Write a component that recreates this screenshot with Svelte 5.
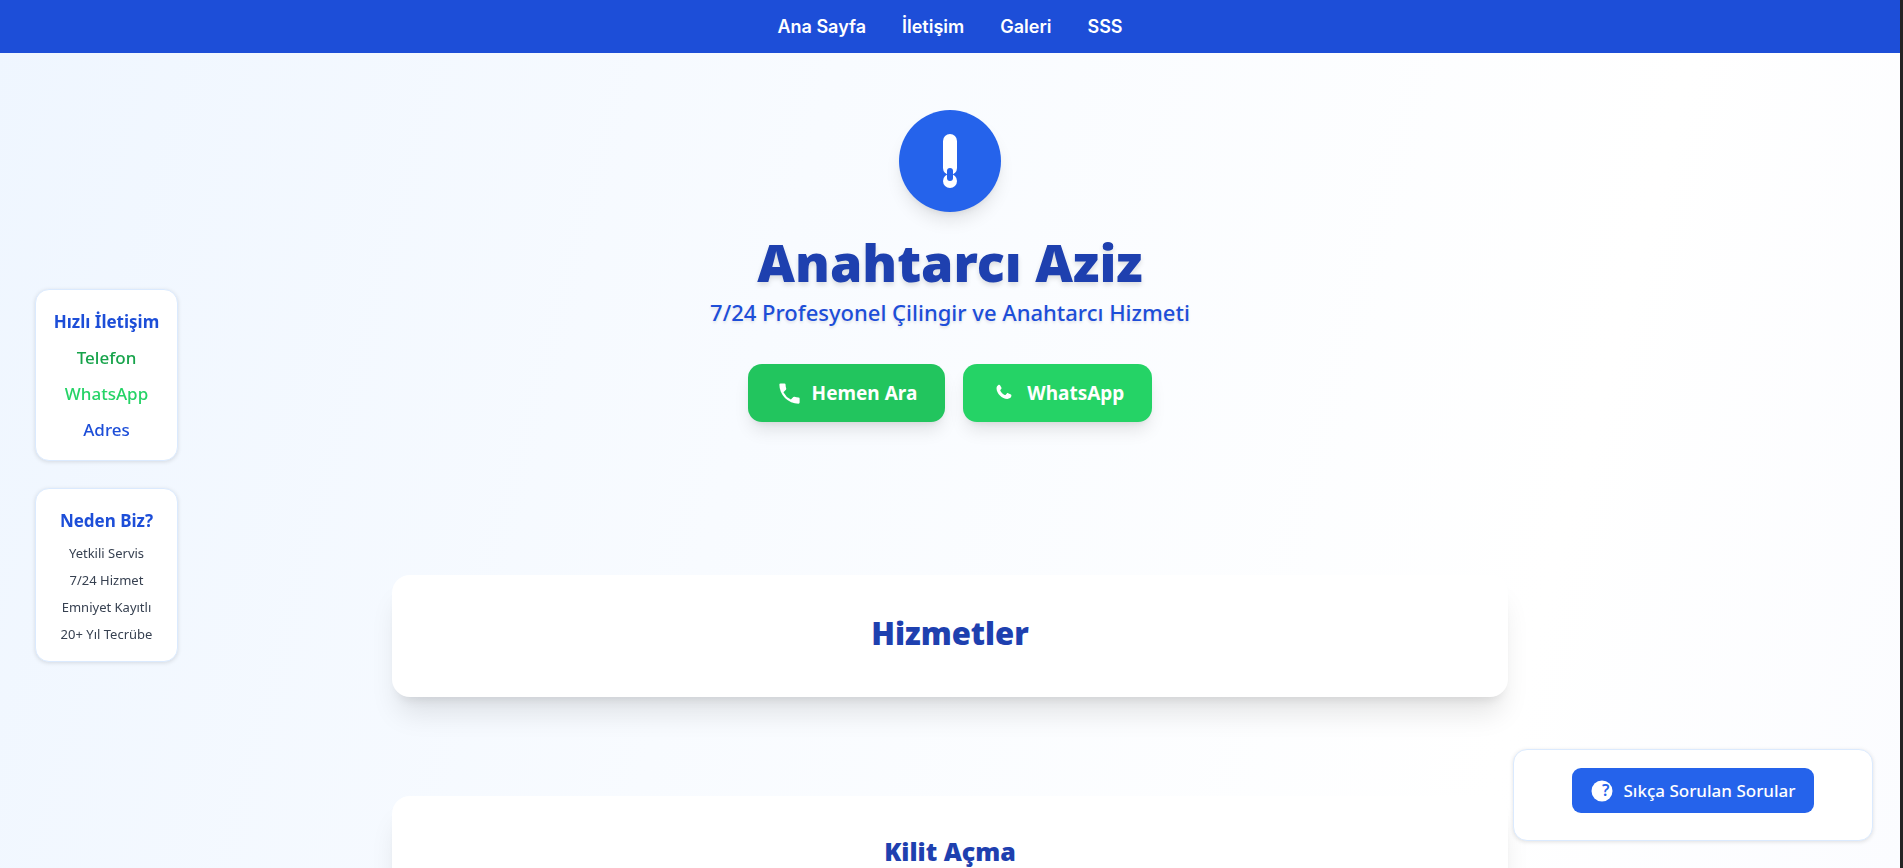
<script lang="ts">
  interface NavItem {
    label: string;
    href: string;
    tone?: string;
  }

  const navItems: NavItem[] = [
    { label: 'Ana Sayfa', href: '#ana-sayfa' },
    { label: 'İletişim', href: '#iletisim' },
    { label: 'Galeri', href: '#galeri' },
    { label: 'SSS', href: '#sss' },
  ];

  const quickLinks: NavItem[] = [
    { label: 'Telefon', href: '#telefon', tone: 'green' },
    { label: 'WhatsApp', href: '#whatsapp', tone: 'whatsapp' },
    { label: 'Adres', href: '#adres', tone: 'blue' },
  ];

  const reasons = ['Yetkili Servis', '7/24 Hizmet', 'Emniyet Kayıtlı', '20+ Yıl Tecrübe'];
</script>

<div class="page">
  <nav class="navbar">
    {#each navItems as item}
      <a href={item.href}>{item.label}</a>
    {/each}
  </nav>

  <main>
    <header class="hero">
      <div class="logo">
        <svg viewBox="0 0 102 102" aria-hidden="true">
          <rect x="44" y="24" width="14" height="41" rx="7" fill="#fff" />
          <circle cx="51" cy="71" r="7" fill="#fff" />
          <rect x="48" y="58" width="6" height="13" rx="3" fill="#2563eb" />
          <path d="M44 62.5 L47.5 64 L44 66.5 Z M58 62.5 L54.5 64 L58 66.5 Z" fill="#2563eb" />
        </svg>
      </div>
      <h1>Anahtarcı Aziz</h1>
      <p class="tagline">7/24 Profesyonel Çilingir ve Anahtarcı Hizmeti</p>
      <div class="actions">
        <a class="action call" href="#telefon">
          <svg viewBox="0 0 24 24" aria-hidden="true">
            <path d="M6.62 10.79a15.05 15.05 0 0 0 6.59 6.59l2.2-2.2a1 1 0 0 1 1.01-.24 11.36 11.36 0 0 0 3.58.57 1 1 0 0 1 1 1V20a1 1 0 0 1-1 1A17 17 0 0 1 3 4a1 1 0 0 1 1-1h3.5a1 1 0 0 1 1 1c0 1.25.2 2.46.57 3.58a1 1 0 0 1-.25 1.01z" />
          </svg>
          Hemen Ara
        </a>
        <a class="action whatsapp" href="#whatsapp">
          <svg viewBox="0 0 24 24" aria-hidden="true">
            <path d="M6.3 4.6c-.6.3-1.4 1.3-1.4 2.7 0 4.6 4.9 9.500 9.600 9.500 1.900 0 3.400-1 3.600-2.500.1-.9 0-1.200-.4-1.400l-2.500-1.200c-.4-.2-.8-.1-1.100.3l-1 1.200c-.3.300-.5.300-.9.100-1.700-.7-3.100-2.100-3.900-3.700-.2-.4-.1-.6.2-.9l.7-.9c.2-.3.200-.6.1-.9L8.200 4.900c-.2-.5-.5-.6-.9-.6-.4 0-.7.1-1 .3z" />
          </svg>
          WhatsApp
        </a>
      </div>
    </header>

    <section class="card">
      <h2>Hizmetler</h2>
    </section>
    <section class="card">
      <h3>Kilit Açma</h3>
    </section>
  </main>

  <aside class="side">
    <div class="panel">
      <h4>Hızlı İletişim</h4>
      <ul class="links">
        {#each quickLinks as link}
          <li><a class={link.tone} href={link.href}>{link.label}</a></li>
        {/each}
      </ul>
    </div>
    <div class="panel">
      <h4>Neden Biz?</h4>
      <ul class="reasons">
        {#each reasons as reason}
          <li>{reason}</li>
        {/each}
      </ul>
    </div>
  </aside>

  <aside class="faq">
    <button type="button">
      <svg viewBox="0 0 24 24" aria-hidden="true">
        <circle cx="12" cy="12" r="10.5" fill="#fff" />
        <text x="12" y="17" font-size="16">?</text>
      </svg>
      Sıkça Sorulan Sorular
    </button>
  </aside>
</div>

<style>
  :global(body) {
    margin: 0;
    overflow: hidden;
  }

  .page {
    box-sizing: border-box;
    height: 100vh;
    overflow-y: auto;
    scrollbar-width: none;
    border-right: 3px solid #242424;
    background: linear-gradient(105deg, #eff6ff 0%, #f8fbff 40%, #ffffff 80%, #fbfcff 100%);
    font-family: 'Noto Sans', 'Open Sans', sans-serif;
  }

  a {
    text-decoration: none;
  }

  h1,
  h2,
  h3,
  h4,
  p,
  ul {
    margin: 0;
    padding: 0;
  }

  ul {
    list-style: none;
  }

  .navbar {
    display: flex;
    justify-content: center;
    gap: 36px;
    padding: 13px 0;
    background: #1d4ed8;
    font-family: Inter, sans-serif;
    font-size: 18px;
    font-weight: 600;
    line-height: 27px;
  }

  .navbar a {
    color: #fff;
  }

  main {
    display: flex;
    flex-direction: column;
    align-items: center;
    padding-bottom: 99px;
  }

  .hero {
    display: flex;
    flex-direction: column;
    align-items: center;
    padding: 57px 0 153px;
  }

  .logo {
    width: 102px;
    height: 102px;
    margin-bottom: 16px;
    border-radius: 50%;
    background: #2563eb;
    box-shadow: 0 11px 17px -3px rgba(0, 0, 0, 0.1), 0 4px 7px -4px rgba(0, 0, 0, 0.1);
  }

  .logo svg {
    display: block;
  }

  h1 {
    color: #1e40af;
    font-size: 52px;
    font-weight: 900;
    line-height: 68px;
    text-shadow: 0 3px 5px rgba(0, 0, 0, 0.12);
  }

  .tagline {
    color: #1d4ed8;
    font-size: 22px;
    font-weight: 500;
    line-height: 32px;
    text-shadow: 0 2px 3px rgba(0, 0, 0, 0.1);
  }

  .actions {
    display: flex;
    gap: 18px;
    margin-top: 36px;
  }

  .action {
    display: flex;
    align-items: center;
    gap: 9px;
    padding: 15px 28px;
    border-radius: 14px;
    color: #fff;
    font-size: 19px;
    font-weight: 700;
    line-height: 28px;
    box-shadow: 0 11px 17px -3px rgba(0, 0, 0, 0.1), 0 4px 7px -4px rgba(0, 0, 0, 0.1);
  }

  .action svg {
    width: 27px;
    height: 27px;
    fill: #fff;
  }

  .call {
    background: #22c55e;
  }

  .action.whatsapp {
    background: #25d366;
  }

  .card {
    box-sizing: border-box;
    width: calc(100% - 784px);
    min-width: 320px;
    margin-bottom: 99px;
    padding: 36px;
    border-radius: 18px;
    background: #fff;
    color: #1e40af;
    text-align: center;
    box-shadow: 0 22px 28px -6px rgba(0, 0, 0, 0.1), 0 9px 11px -7px rgba(0, 0, 0, 0.1);
  }

  h2 {
    margin-bottom: 6px;
    font-size: 31px;
    font-weight: 900;
    line-height: 44px;
  }

  h3 {
    font-size: 25px;
    font-weight: 900;
    line-height: 38px;
  }

  .side {
    position: fixed;
    top: 33.3vh;
    left: 35px;
    display: flex;
    flex-direction: column;
    gap: 27px;
  }

  .panel {
    box-sizing: border-box;
    width: 143px;
    padding: 18px 0 17px;
    border: 1px solid #dbeafe;
    border-radius: 14px;
    background: #fff;
    text-align: center;
    box-shadow: 0 1px 4px rgba(0, 0, 0, 0.12);
  }

  h4 {
    color: #1d4ed8;
    font-size: 17px;
    font-weight: 700;
    line-height: 28px;
  }

  .links {
    display: flex;
    flex-direction: column;
    gap: 9px;
    margin-top: 8px;
    font-size: 17px;
    font-weight: 500;
    line-height: 27px;
  }

  .green {
    color: #16a34a;
  }

  li .whatsapp {
    color: #25d366;
  }

  .blue {
    color: #1d4ed8;
  }

  .reasons {
    display: flex;
    flex-direction: column;
    gap: 7px;
    margin-top: 8px;
    color: #374151;
    font-size: 13px;
    line-height: 20px;
  }

  .faq {
    position: fixed;
    right: 30px;
    bottom: 27px;
    box-sizing: border-box;
    width: 360px;
    padding: 18px 0 27px;
    border: 1px solid #dbeafe;
    border-radius: 14px;
    background: #fff;
    box-shadow: 0 1px 4px rgba(0, 0, 0, 0.12);
  }

  .faq button {
    display: flex;
    align-items: center;
    gap: 9px;
    margin: 0 auto;
    padding: 9px 18px;
    border: 0;
    border-radius: 9px;
    background: #2563eb;
    color: #fff;
    font-family: inherit;
    font-size: 17px;
    font-weight: 500;
    line-height: 27px;
  }

  .faq svg {
    width: 24px;
    height: 24px;
  }

  .faq text {
    fill: #2563eb;
    font-weight: 600;
  }
</style>
